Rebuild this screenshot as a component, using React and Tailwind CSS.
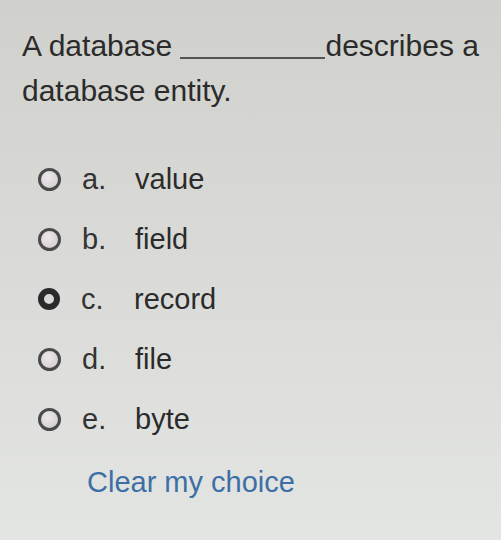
import React from "react";

const options = [
  { l: "a.", t: "value" },
  { l: "b.", t: "field" },
  { l: "c.", t: "record", sel: true },
  { l: "d.", t: "file" },
  { l: "e.", t: "byte" },
];

function Radio({ sel }) {
  if (sel) {
    return (
      <span className="w-[22px] h-[22px] rounded-full border-[6px] border-[#2a2a2a] bg-[#d8d8d8] shrink-0" />
    );
  }
  return (
    <span className="w-[23px] h-[23px] rounded-full border-[3px] border-[#4a4a4a] bg-[radial-gradient(circle_at_40%_35%,#ece8ea,#cfc8cc)] shrink-0" />
  );
}

export default function App() {
  return (
    <div
      className="w-[501px] min-h-[540px] bg-linear-to-b from-[#d0d0cc] via-[#dadbd8] to-[#e3e5e2] text-[#2b2b2b] overflow-hidden"
      style={{ fontFamily: '"Liberation Sans", Arial, sans-serif' }}
    >
      <p className="pt-[23px] pl-[22px] pr-[10px] text-[30px] leading-[45px]">
        A database{" "}
        <span className="inline-block w-[145px] h-[2px] bg-[#555] align-[-3px]" />
        describes a database entity.
      </p>
      <div className="mt-[36px] flex flex-col">
        {options.map((o) => (
          <div key={o.l} className="h-[60px] flex items-center pl-[38px]">
            <Radio sel={o.sel} />
            <span className="ml-[21px] w-[53px] text-[29px] leading-[60px] text-[#333]">{o.l}</span>
            <span className="text-[29px] leading-[60px]">{o.t}</span>
          </div>
        ))}
      </div>
      <div className="mt-[3px] pl-[87px] text-[29px] leading-[60px] text-[#3d6fa6]">Clear my choice</div>
    </div>
  );
}
